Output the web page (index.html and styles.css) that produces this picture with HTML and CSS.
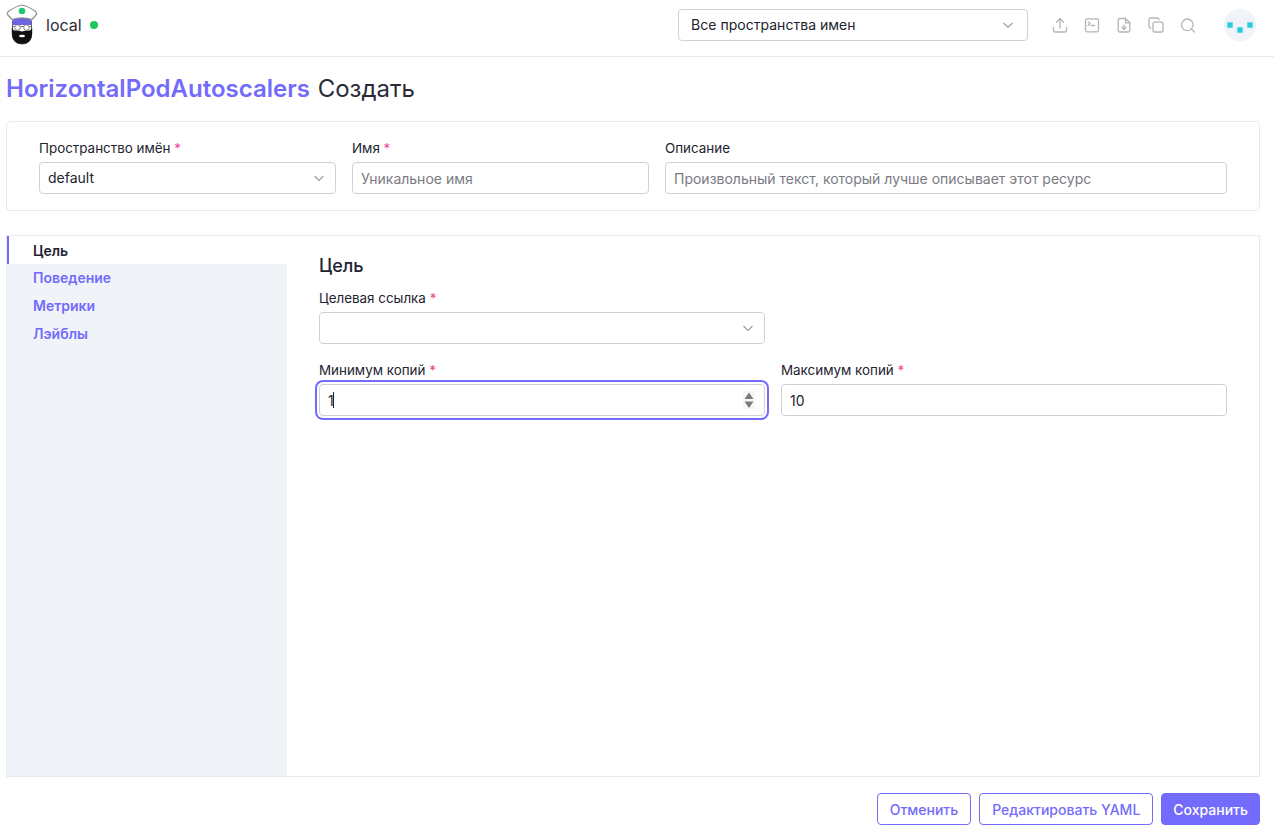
FILE: index.html
```html
<!DOCTYPE html>
<html lang="ru">
<head>
<meta charset="utf-8">
<title>HorizontalPodAutoscalers</title>
<link rel="stylesheet" href="styles.css">
</head>
<body>
<div class="app">
  <header class="topbar">
    <div class="cluster">
      <svg class="logo" width="34" height="44" viewBox="0 0 34 44">
        <path d="M7.500 18 V30 Q7.500 41 17 41 Q26.500 41 26.500 30 V18 Z" fill="#fff" stroke="#333" stroke-width="0.8"/>
        <path d="M6.800 25 V30.500 Q7 41 17 41 Q27 41 27.200 30.500 V25 L25 27.500 Q21 27 17 28.500 Q13 27 9 27.500 Z" fill="#111"/>
        <ellipse cx="17" cy="33" rx="3" ry="1.300" fill="#fff"/>
        <rect x="7.500" y="15" width="19" height="7" fill="#6d65e0"/>
        <path d="M8 23.500 H26" stroke="#444" stroke-width="0.7"/>
        <circle cx="12.500" cy="24.500" r="2.800" fill="#fff" stroke="#666" stroke-width="0.8"/>
        <circle cx="21.500" cy="24.500" r="2.800" fill="#fff" stroke="#666" stroke-width="0.8"/>
        <path d="M7 16.500 L2.500 11.500 Q1.800 9.500 4 8 Q12 2.800 17 2 Q22 2.800 30 8 Q32.200 9.500 31.500 11.500 L27 16.500 Q17 13 7 16.500 Z" fill="#fff" stroke="#8f9194" stroke-width="1.200" stroke-linejoin="round"/>
        <circle cx="17" cy="8" r="3.300" fill="#22c773"/>
      </svg>
      <span class="cluster-name">local</span>
      <span class="dot"></span>
    </div>
    <div class="top-right">
      <div class="select ns-select"><span>Все пространства имен</span>
        <svg class="chev" width="12" height="12" viewBox="0 0 12 12"><path d="M1.5 4 L6 8.5 L10.5 4" fill="none" stroke="#9a9aa2" stroke-width="1.1"/></svg>
      </div>
      <div class="icons">
        <svg width="16" height="16" viewBox="0 0 16 16" fill="none" stroke="#b4b4b9" stroke-width="1.300" stroke-linecap="round" stroke-linejoin="round"><path d="M1.500 10.500 V13.500 Q1.500 15 3 15 H13 Q14.500 15 14.500 13.500 V10.500"/><path d="M8 11 V2"/><path d="M4.500 5.200 L8 1.500 L11.500 5.200"/></svg>
        <svg width="16" height="16" viewBox="0 0 16 16" fill="none" stroke="#b4b4b9" stroke-width="1.300" stroke-linecap="round" stroke-linejoin="round"><rect x="1.500" y="1.800" width="13" height="13" rx="1.600"/><path d="M4.200 5 L6.200 6.800 L4.200 8.500"/><path d="M7.500 8.500 H10.500"/></svg>
        <svg width="16" height="16" viewBox="0 0 16 16" fill="none" stroke="#b4b4b9" stroke-width="1.300" stroke-linecap="round" stroke-linejoin="round"><path d="M9.500 1.500 H3.700 Q2.200 1.500 2.200 3 V13.500 Q2.200 15 3.700 15 H12.300 Q13.800 15 13.800 13.500 V5.800 Z"/><path d="M9.500 1.500 V5.800 H13.800"/><path d="M8 8 V12.300"/><path d="M6 10.300 L8 12.300 L10 10.300"/></svg>
        <svg width="16" height="16" viewBox="0 0 16 16" fill="none" stroke="#b4b4b9" stroke-width="1.300" stroke-linecap="round" stroke-linejoin="round"><rect x="5" y="5.200" width="10" height="9.800" rx="1.600"/><path d="M11 2.800 V2.600 Q11 1 9.400 1 H2.600 Q1 1 1 2.600 V9.400 Q1 11 2.600 11 H2.800"/></svg>
        <svg width="16" height="16" viewBox="0 0 16 16" fill="none" stroke="#b4b4b9" stroke-width="1.300" stroke-linecap="round"><circle cx="7.300" cy="7.800" r="5.800"/><path d="M11.600 12.100 L14.500 15"/></svg>
      </div>
      <div class="avatar">
        <svg width="32" height="32" viewBox="0 0 32 32"><g fill="#2bcbe0"><rect x="3.300" y="13.300" width="5.400" height="5.400"/><rect x="13.300" y="18.300" width="5.400" height="5.400"/><rect x="23.300" y="13.300" width="5.400" height="5.400"/></g></svg>
      </div>
    </div>
  </header>

  <main class="page">
    <h1 class="title"><a class="crumb">HorizontalPodAutoscalers</a> <span class="title-action">Создать</span></h1>

    <section class="meta-card">
      <div class="field f-ns">
        <label class="label">Пространство имён <i>*</i></label>
        <div class="select"><span>default</span>
          <svg class="chev" width="12" height="12" viewBox="0 0 12 12"><path d="M1.5 4 L6 8.5 L10.5 4" fill="none" stroke="#9a9aa2" stroke-width="1.1"/></svg>
        </div>
      </div>
      <div class="field f-name">
        <label class="label">Имя <i>*</i></label>
        <input class="input" type="text" placeholder="Уникальное имя">
      </div>
      <div class="field f-desc">
        <label class="label">Описание</label>
        <input class="input" type="text" placeholder="Произвольный текст, который лучше описывает этот ресурс">
      </div>
    </section>

    <section class="tabs-card">
      <nav class="tabs">
        <div class="tab active">Цель</div>
        <div class="tab-rest">
          <div class="tab">Поведение</div>
          <div class="tab">Метрики</div>
          <div class="tab">Лэйблы</div>
        </div>
      </nav>
      <div class="tab-body">
        <h2 class="section-title">Цель</h2>
        <div class="field f-target">
          <label class="label">Целевая ссылка <i>*</i></label>
          <div class="select"><span></span>
            <svg class="chev" width="12" height="12" viewBox="0 0 12 12"><path d="M1.5 4 L6 8.5 L10.5 4" fill="none" stroke="#9a9aa2" stroke-width="1.1"/></svg>
          </div>
        </div>
        <div class="row-2">
          <div class="field">
            <label class="label">Минимум копий <i>*</i></label>
            <div class="input focus"><span class="val">1</span><span class="caret"></span>
              <svg class="spin" width="12" height="18" viewBox="0 0 12 18"><rect width="12" height="18" fill="#f7f7f8"/><path d="M6 1.500 L10.500 8 H1.500 Z M6 17 L10.500 10.500 H1.500 Z" fill="#7a7a80"/></svg>
            </div>
          </div>
          <div class="field">
            <label class="label">Максимум копий <i>*</i></label>
            <div class="input"><span class="val">10</span></div>
          </div>
        </div>
      </div>
    </section>

    <footer class="actions">
      <button class="btn">Отменить</button>
      <button class="btn">Редактировать YAML</button>
      <button class="btn primary">Сохранить</button>
    </footer>
  </main>
</div>
</body>
</html>
```

FILE: styles.css
```css
* { box-sizing: border-box; }
html, body { margin: 0; padding: 0; height: 100%; }
body {
  font-family: Inter, "Noto Sans", sans-serif;
  font-size: 14px;
  color: #23232f;
  background: #fff;
  overflow: hidden;
}
.app { height: 832px; display: flex; flex-direction: column; }

.topbar {
  height: 57px;
  flex: none;
  display: flex;
  justify-content: space-between;
  align-items: center;
  border-bottom: 1px solid #e9e9f2;
  padding: 0 18px 6px 5px;
}
.cluster { display: flex; align-items: center; }
.logo { display: block; }
.cluster-name { font-size: 16px; margin-left: 7px; color: #2b2b38; }
.dot { width: 8px; height: 8px; border-radius: 50%; background: #22c55e; margin-left: 8px; margin-top: -1px; }
.top-right { display: flex; align-items: center; }
.select {
  height: 32px;
  border: 1px solid #d0d0d9;
  border-radius: 4px;
  display: flex;
  align-items: center;
  justify-content: space-between;
  padding: 0 10px 0 8px;
  background: #fff;
}
.select span { margin-bottom: 2px; }
.ns-select { width: 350px; padding: 0 13px 0 12px; letter-spacing: 0.03px; }
.icons { display: flex; gap: 16px; margin-left: 24px; }
.icons svg { display: block; }
.avatar {
  width: 32px; height: 32px; border-radius: 50%;
  background: #f0f3f8; margin-left: 28px;
}
.avatar svg { display: block; }

.page { flex: 1; display: flex; flex-direction: column; padding: 0 14px 7px 6px; min-height: 0; }
.title { margin: 0; font-size: 24px; line-height: 32px; font-weight: 400; padding: 16px 0 16px; color: #2a2a36; height: 64px; }
.crumb { color: #736bfb; font-weight: 600; }
.title-action { margin-left: 1px; }

.meta-card {
  height: 90px;
  flex: none;
  border: 1px solid #e9e9f6;
  border-radius: 4px;
  display: flex;
  gap: 16px;
  padding: 16px 32px 0;
}
.field { display: flex; flex-direction: column; }
.f-ns { width: 297px; flex: none; }
.f-name { width: 297px; flex: none; }
.f-desc { flex: 1; }
.label { font-size: 13.4px; font-weight: 430; line-height: 20px; color: #23232f; margin-bottom: 4px; }
.label i { font-style: normal; color: #ec4899; }
.input {
  height: 32px;
  border: 1px solid #d0d0d9;
  border-radius: 4px;
  padding: 0 8px;
  font: inherit;
  color: inherit;
  background: #fff;
  outline: none;
  width: 100%;
  display: flex;
  align-items: center;
  position: relative;
}
.input::placeholder { color: #7a7a82; opacity: 1; }
.input.focus { box-shadow: 0 0 0 2px #fff, 0 0 0 4px #736bfb; border-color: #d0d0d9; }
.caret { width: 1px; height: 16px; background: #23232f; margin-left: -1px; }
.spin { position: absolute; right: 9px; top: 6px; }

.tabs-card {
  flex: 1;
  min-height: 0;
  margin-top: 24px;
  border: 1px solid #e9e9f6;
  display: flex;
}
.tabs { width: 280px; flex: none; display: flex; flex-direction: column; font-weight: 600; }
.tab { height: 28px; line-height: 28px; padding-left: 26px; font-size: 14px; color: #736bfb; }
.tab.active { color: #23232f; border-left: 2px solid #736bfb; padding-left: 24px; line-height: 30px; }
.tab-rest { flex: 1; background: #f0f3f8; }
.tab-body { flex: 1; padding: 18px 32px 0; }
.section-title { margin: 0 0 10px; font-size: 18px; line-height: 24px; font-weight: 450; color: #23232f; }
.f-target { width: 446px; margin-bottom: 16px; }
.row-2 { display: grid; grid-template-columns: 446px 446px; gap: 16px; }

.actions { flex: none; display: flex; justify-content: flex-end; gap: 8px; padding-top: 16px; height: 48px; }
.btn {
  height: 32px;
  padding: 0 12px;
  font: 500 14px Inter, "Noto Sans", sans-serif;
  color: #736bfb;
  background: #fff;
  border: 1px solid #736bfb;
  border-radius: 4px;
}
.btn.primary { background: #736bfb; color: #fff; padding: 0 11px; }
```
